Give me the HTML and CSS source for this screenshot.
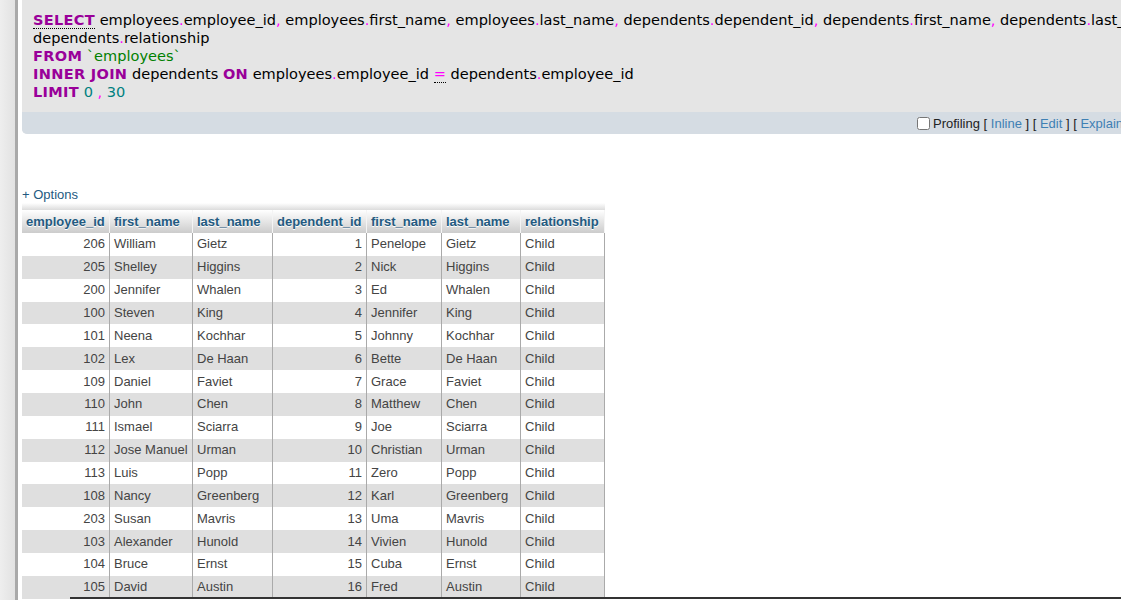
FILE: index.html
```html
<!DOCTYPE html>
<html lang="en">
<head>
<meta charset="utf-8">
<title>SQL result</title>
<link rel="stylesheet" href="styles.css">
</head>
<body>
<div class="page">
  <aside class="nav-edge"></aside>
  <main class="content">
    <section class="sql-panel">
      <div class="sql-code">
        <div class="sql-line"><span class="kw link">SELECT</span> employees<span class="pn">.</span>employee_id<span class="pn">,</span> employees<span class="pn">.</span>first_name<span class="pn">,</span> employees<span class="pn">.</span>last_name<span class="pn">,</span> dependents<span class="pn">.</span>dependent_id<span class="pn">,</span> dependents<span class="pn">.</span>first_name<span class="pn">,</span> dependents<span class="pn">.</span>last_name<span class="pn">,</span></div>
        <div class="sql-line">dependents<span class="pn">.</span>relationship</div>
        <div class="sql-line"><span class="kw">FROM</span> <span class="str">`employees`</span></div>
        <div class="sql-line"><span class="kw">INNER JOIN</span> dependents <span class="kw">ON</span> employees<span class="pn">.</span>employee_id <span class="pn link">=</span> dependents<span class="pn">.</span>employee_id</div>
        <div class="sql-line"><span class="kw">LIMIT</span> <span class="num">0</span> <span class="pn">,</span> <span class="num">30</span></div>
      </div>
      <div class="sql-tools">
        <label class="profiling"><input type="checkbox">Profiling</label>
        [ <a class="tool">Inline</a> ] [ <a class="tool">Edit</a> ] [ <a class="tool">Explain SQL</a> ] [ <a class="tool">Create PHP code</a> ] [ <a class="tool">Refresh</a> ]
      </div>
    </section>

    <div class="options"><a>+ Options</a></div>

    <div class="result">
      <div class="result-shadow"></div>
      <table class="data">
        <colgroup>
          <col class="c1"><col class="c2"><col class="c3"><col class="c4"><col class="c5"><col class="c6"><col class="c7">
        </colgroup>
        <thead>
          <tr><th>employee_id</th><th>first_name</th><th>last_name</th><th>dependent_id</th><th>first_name</th><th>last_name</th><th>relationship</th></tr>
        </thead>
        <tbody>
          <tr><td class="n">206</td><td>William</td><td>Gietz</td><td class="n">1</td><td>Penelope</td><td>Gietz</td><td>Child</td></tr>
          <tr><td class="n">205</td><td>Shelley</td><td>Higgins</td><td class="n">2</td><td>Nick</td><td>Higgins</td><td>Child</td></tr>
          <tr><td class="n">200</td><td>Jennifer</td><td>Whalen</td><td class="n">3</td><td>Ed</td><td>Whalen</td><td>Child</td></tr>
          <tr><td class="n">100</td><td>Steven</td><td>King</td><td class="n">4</td><td>Jennifer</td><td>King</td><td>Child</td></tr>
          <tr><td class="n">101</td><td>Neena</td><td>Kochhar</td><td class="n">5</td><td>Johnny</td><td>Kochhar</td><td>Child</td></tr>
          <tr><td class="n">102</td><td>Lex</td><td>De Haan</td><td class="n">6</td><td>Bette</td><td>De Haan</td><td>Child</td></tr>
          <tr><td class="n">109</td><td>Daniel</td><td>Faviet</td><td class="n">7</td><td>Grace</td><td>Faviet</td><td>Child</td></tr>
          <tr><td class="n">110</td><td>John</td><td>Chen</td><td class="n">8</td><td>Matthew</td><td>Chen</td><td>Child</td></tr>
          <tr><td class="n">111</td><td>Ismael</td><td>Sciarra</td><td class="n">9</td><td>Joe</td><td>Sciarra</td><td>Child</td></tr>
          <tr><td class="n">112</td><td>Jose Manuel</td><td>Urman</td><td class="n">10</td><td>Christian</td><td>Urman</td><td>Child</td></tr>
          <tr><td class="n">113</td><td>Luis</td><td>Popp</td><td class="n">11</td><td>Zero</td><td>Popp</td><td>Child</td></tr>
          <tr><td class="n">108</td><td>Nancy</td><td>Greenberg</td><td class="n">12</td><td>Karl</td><td>Greenberg</td><td>Child</td></tr>
          <tr><td class="n">203</td><td>Susan</td><td>Mavris</td><td class="n">13</td><td>Uma</td><td>Mavris</td><td>Child</td></tr>
          <tr><td class="n">103</td><td>Alexander</td><td>Hunold</td><td class="n">14</td><td>Vivien</td><td>Hunold</td><td>Child</td></tr>
          <tr><td class="n">104</td><td>Bruce</td><td>Ernst</td><td class="n">15</td><td>Cuba</td><td>Ernst</td><td>Child</td></tr>
          <tr><td class="n">105</td><td>David</td><td>Austin</td><td class="n">16</td><td>Fred</td><td>Austin</td><td>Child</td></tr>
        </tbody>
      </table>
    </div>
  </main>
</div>
<div class="console-edge"></div>
</body>
</html>
```

FILE: styles.css
```css
html, body {
  margin: 0;
  padding: 0;
  background: #fff;
  overflow: hidden;
}

body {
  font-family: "Liberation Sans", Arial, sans-serif;
  font-size: 13px;
  color: #444;
}

.page {
  display: flex;
  height: 600px;
}

.nav-edge {
  flex: none;
  width: 15px;
  background: linear-gradient(to right, #eeeeee, #e2e2e2);
  border-right: 3px solid #a9a9a9;
}

.content {
  flex: none;
  width: 1340px;
  padding-left: 4px;
}

.sql-panel {
  background: #e5e5e5;
  border-bottom-left-radius: 5px;
}

.sql-code {
  padding: 11px;
  font-family: "DejaVu Sans", Verdana, sans-serif;
  font-size: 14.55px;
  line-height: 18px;
  color: #000;
}

.sql-line {
  white-space: nowrap;
}

.kw {
  color: #990099;
  font-weight: bold;
  letter-spacing: 0.3px;
}

.pn {
  color: #ff00ff;
}

.str {
  color: #008000;
}

.num {
  color: #008080;
}

.link {
  border-bottom: 1px dotted #000;
}

.sql-tools {
  height: 20px;
  padding-top: 2px;
  line-height: 20px;
  padding-left: 891px;
  background: #d5dce3;
  border-bottom-left-radius: 5px;
  font-size: 13px;
  color: #222;
  white-space: nowrap;
}

.profiling {
  color: #222;
}

.profiling input {
  margin: 0 3px 0 4px;
  width: 13px;
  height: 13px;
  vertical-align: -2px;
}

.tool {
  color: #3f80b4;
}

.options {
  margin-top: 53px;
  line-height: 16px;
  font-size: 13px;
}

.options a {
  color: #235a81;
}

.result {
  width: 583px;
}

.result-shadow {
  height: 7px;
  background: linear-gradient(to bottom, #ffffff, #dcdcdc);
}

.data {
  border-collapse: separate;
  border-spacing: 0;
  table-layout: fixed;
  width: 583px;
}

.c1 { width: 88px; }
.c2 { width: 83px; }
.c3 { width: 80px; }
.c4 { width: 94px; }
.c5 { width: 75px; }
.c6 { width: 79px; }
.c7 { width: 84px; }

.data th {
  height: 23px;
  padding: 0 3px 0 4px;
  text-align: left;
  font-weight: bold;
  color: #235a81;
  text-shadow: 0 1px 0 #fff;
  background: linear-gradient(to bottom, #ffffff, #cccccc);
  border-right: 1px solid #f4f4f4;
  white-space: nowrap;
  overflow: hidden;
  box-sizing: border-box;
}

.data td {
  height: 22.87px;
  padding: 0 3px 0 4px;
  line-height: 22px;
  border-right: 1px solid #aaaaaa;
  white-space: nowrap;
  overflow: hidden;
  box-sizing: border-box;
}

.data td.n {
  text-align: right;
  padding-right: 4px;
}

.data tbody tr:nth-child(even) td {
  background: #dfdfdf;
}

.console-edge {
  position: fixed;
  left: 70px;
  right: 0;
  bottom: 1px;
  height: 2px;
  background: #333;
}
```
